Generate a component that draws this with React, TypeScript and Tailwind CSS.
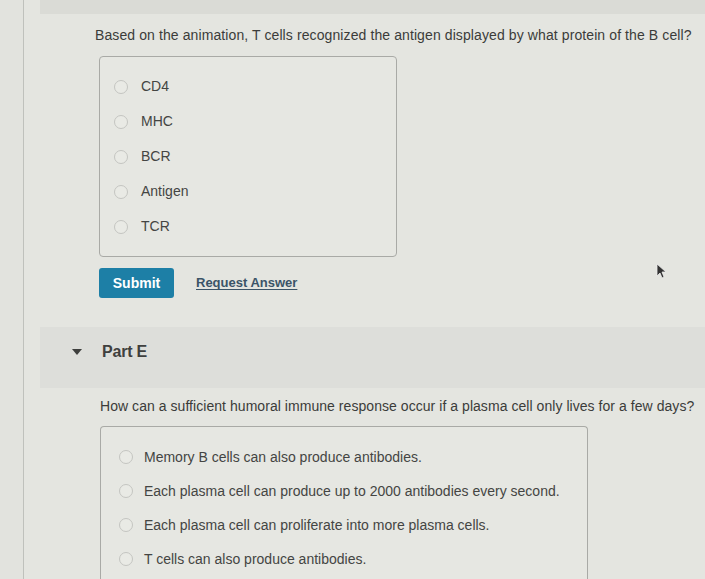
import React, { FC } from "react";

interface OptionListProps {
  options: string[];
  rowClass: string;
  padClass: string;
  gapClass: string;
}

const Radio: FC = () => (
  <span className="inline-block w-[14px] h-[14px] rounded-full border border-[#c4c5c1] bg-[#e9eae5] shrink-0" />
);

const OptionList: FC<OptionListProps> = ({ options, rowClass, padClass, gapClass }) => (
  <div className={padClass}>
    {options.map((o) => (
      <div key={o} className={`flex items-center ${rowClass} ${gapClass}`}>
        <Radio />
        <span className="text-[14px] text-[#444543]">{o}</span>
      </div>
    ))}
  </div>
);

const App: FC = () => {
  return (
    <div
      className="relative w-[705px] h-[579px] overflow-hidden bg-[#e4e5e0] flex"
      style={{ fontFamily: '"Liberation Sans", Arial, sans-serif' }}
    >
      <div className="w-[24px] shrink-0 border-r border-[#bfc1bc] bg-[#e2e3de]" />
      <div className="flex-1 pl-[16px] flex flex-col">
        <div className="h-[14px] shrink-0 bg-[#dadbd6]" />

        <p className="shrink-0 mt-[11px] pl-[55px] text-[14px] leading-[20px] text-[#3b3c3a] tracking-[0.1px]">
          Based on the animation, T cells recognized the antigen displayed by what protein of the B cell?
        </p>

        <div className="shrink-0 mt-[11px] ml-[59px] w-[298px] h-[201px] rounded-[4px] border border-[#a9aaa6] bg-[#e6e7e2]">
          <OptionList
            options={["CD4", "MHC", "BCR", "Antigen", "TCR"]}
            rowClass="h-[35px]"
            padClass="pt-[12px] pl-[14px]"
            gapClass="gap-[13px]"
          />
        </div>

        <div className="shrink-0 mt-[11px] ml-[59px] flex items-center gap-[22px]">
          <button className="w-[75px] h-[30px] rounded-[3px] bg-[#1d7fa6] text-white text-[14px] font-bold">
            Submit
          </button>
          <span className="text-[13px] font-bold text-[#3b5468] underline underline-offset-2">
            Request Answer
          </span>
        </div>

        <div className="shrink-0 mt-[29px] h-[61px] pb-[12px] bg-[#dddeda] flex items-center">
          <svg width="10" height="6" viewBox="0 0 10 6" className="ml-[32px]">
            <path d="M0 0 L10 0 L5 6 Z" fill="#3e3f3d" />
          </svg>
          <span className="ml-[20px] text-[16px] font-bold text-[#3f403e] tracking-[-0.2px]">Part E</span>
        </div>

        <p className="shrink-0 mt-[8px] pl-[60px] text-[14px] leading-[20px] text-[#3b3c3a] tracking-[0.05px]">
          How can a sufficient humoral immune response occur if a plasma cell only lives for a few days?
        </p>

        <div className="shrink-0 mt-[10px] ml-[60px] w-[488px] h-[170px] rounded-t-[4px] border border-b-0 border-[#a9aaa6] bg-[#e6e7e2]">
          <OptionList
            options={[
              "Memory B cells can also produce antibodies.",
              "Each plasma cell can produce up to 2000 antibodies every second.",
              "Each plasma cell can proliferate into more plasma cells.",
              "T cells can also produce antibodies.",
            ]}
            rowClass="h-[34px]"
            padClass="pt-[13px] pl-[18px]"
            gapClass="gap-[11px]"
          />
        </div>
      </div>

      <svg width="12" height="16" viewBox="0 0 12 16" className="absolute left-[656px] top-[263px]">
        <path d="M1 1 L1 13 L4 10 L6 15 L8 14 L6 9 L10 9 Z" fill="#333" stroke="#eee" strokeWidth="0.8" />
      </svg>
    </div>
  );
};

export default App;
